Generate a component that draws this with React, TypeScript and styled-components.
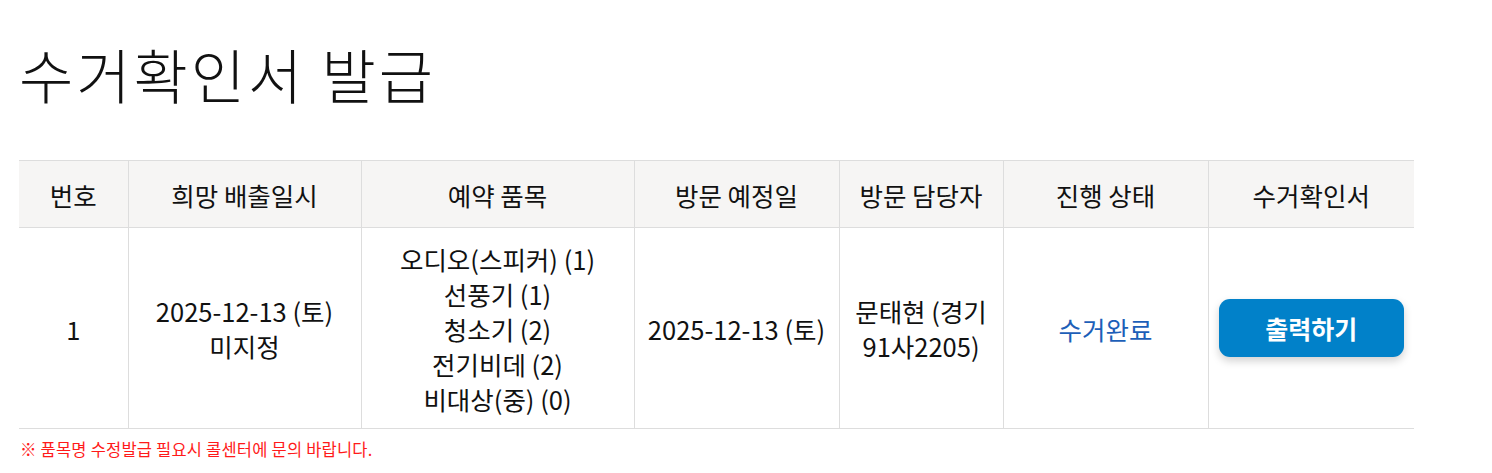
import React from 'react';
import styled, { createGlobalStyle } from 'styled-components';

const FONT = `"Noto Sans CJK KR", "Noto Sans", sans-serif`;

const GlobalStyle = createGlobalStyle`
  body {
    margin: 0;
    background: #fff;
    font-family: ${FONT};
    color: #111;
  }
`;

const Page = styled.div`
  padding: 32px 19px 0 19px;
  width: 1395px;
`;

const Title = styled.h1`
  margin: 0 0 44px 0;
  font-size: 59px;
  font-weight: 300;
  line-height: 84px;
  letter-spacing: 3px;
  color: #111;
`;

const Table = styled.table`
  width: 1395px;
  border-collapse: collapse;
  table-layout: fixed;
  border-top: 1px solid #ddd;
  border-bottom: 1px solid #ddd;
`;

const Col = styled.col<{ $w: number }>`
  width: ${(p) => p.$w}px;
`;

const HeadCell = styled.th`
  height: 66px;
  padding: 0;
  background: #f6f5f4;
  border-left: 1px solid #ddd;
  border-bottom: 1px solid #ddd;
  font-size: 25.5px;
  font-weight: 400;
  text-align: center;
  vertical-align: middle;

  &:first-child {
    border-left: none;
  }
`;

const Cell = styled.td<{ $tone?: 'status' }>`
  height: 200px;
  padding: 0 8px;
  border-left: 1px solid #ddd;
  font-size: 25.5px;
  line-height: 35px;
  text-align: center;
  vertical-align: middle;
  word-break: keep-all;
  color: ${(p) => (p.$tone === 'status' ? '#1d5fb8' : '#111')};

  &:first-child {
    border-left: none;
  }
`;

const PrintButton = styled.button`
  width: 185px;
  height: 58px;
  border: none;
  border-radius: 11px;
  background: #0181c9;
  color: #fff;
  font-family: ${FONT};
  font-size: 25px;
  font-weight: 700;
  box-shadow: 0 4px 8px rgba(0, 0, 0, 0.18);
  cursor: pointer;
`;

const Note = styled.p`
  margin: 8px 0 0 1px;
  font-size: 16.5px;
  letter-spacing: 0.2px;
  color: #ff1a1a;
`;

const columns = [
  { label: '번호', w: 109 },
  { label: '희망 배출일시', w: 233 },
  { label: '예약 품목', w: 273 },
  { label: '방문 예정일', w: 205 },
  { label: '방문 담당자', w: 164 },
  { label: '진행 상태', w: 205 },
  { label: '수거확인서', w: 206 },
];

const items = ['오디오(스피커) (1)', '선풍기 (1)', '청소기 (2)', '전기비데 (2)', '비대상(중) (0)'];

const App: React.FC = () => {
  return (
    <>
      <GlobalStyle />
      <Page>
        <Title>수거확인서 발급</Title>
        <Table>
          <colgroup>
            {columns.map((c) => (
              <Col key={c.label} $w={c.w} />
            ))}
          </colgroup>
          <thead>
            <tr>
              {columns.map((c) => (
                <HeadCell key={c.label}>{c.label}</HeadCell>
              ))}
            </tr>
          </thead>
          <tbody>
            <tr>
              <Cell>1</Cell>
              <Cell>
                2025-12-13 (토)
                <br />
                미지정
              </Cell>
              <Cell>
                {items.map((item) => (
                  <div key={item}>{item}</div>
                ))}
              </Cell>
              <Cell>2025-12-13 (토)</Cell>
              <Cell>
                문태현 (경기
                <br />
                91사2205)
              </Cell>
              <Cell $tone="status">수거완료</Cell>
              <Cell>
                <PrintButton>출력하기</PrintButton>
              </Cell>
            </tr>
          </tbody>
        </Table>
        <Note>※ 품목명 수정발급 필요시 콜센터에 문의 바랍니다.</Note>
      </Page>
    </>
  );
};

export default App;
